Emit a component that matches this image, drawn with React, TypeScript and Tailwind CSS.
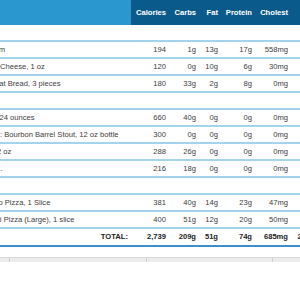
import React from 'react'

type Item = {
  name: string
  cal: string
  carbs: string
  fat: string
  protein: string
  chol: string
  sodium: string
}

const meals: { title: string; items: Item[] }[] = [
  {
    title: 'Breakfast',
    items: [
      { name: 'Whole Eggs, Scrambled, 3 Medium', cal: '194', carbs: '1g', fat: '13g', protein: '17g', chol: '558mg', sodium: '189mg' },
      { name: 'Tillamook - Sharp White Cheddar Cheese, 1 oz', cal: '120', carbs: '0g', fat: '10g', protein: '6g', chol: '30mg', sodium: '180mg' },
      { name: "Nature's Own - 100% Whole Wheat Bread, 3 pieces", cal: '180', carbs: '33g', fat: '2g', protein: '8g', chol: '0mg', sodium: '330mg' },
    ],
  },
  {
    title: 'Drinks',
    items: [
      { name: 'Blue Moon Belgian White Wheat, 24 ounces', cal: '660', carbs: '40g', fat: '0g', protein: '0g', chol: '0mg', sodium: '30mg' },
      { name: 'Lexington Brewing & Distilling Co.: Bourbon Barrel Stout, 12 oz bottle', cal: '300', carbs: '0g', fat: '0g', protein: '0g', chol: '0mg', sodium: '20mg' },
      { name: 'Samuel Adams - Boston Lager, 12 oz', cal: '288', carbs: '26g', fat: '0g', protein: '0g', chol: '0mg', sodium: '20mg' },
      { name: 'Heineken Premium Lager, 12 fl oz.', cal: '216', carbs: '18g', fat: '0g', protein: '0g', chol: '0mg', sodium: '10mg' },
    ],
  },
  {
    title: 'Dinner',
    items: [
      { name: "Lou Malnati's - Deep Dish Chicago Pizza, 1 Slice", cal: '381', carbs: '40g', fat: '14g', protein: '23g', chol: '47mg', sodium: '800mg' },
      { name: 'Pizza Hut Hand Tossed Pepperoni Pizza (Large), 1 slice', cal: '400', carbs: '51g', fat: '12g', protein: '20g', chol: '50mg', sodium: '991mg' },
    ],
  },
]

const columns = ['Calories', 'Carbs', 'Fat', 'Protein', 'Cholest', 'Sodium']

const grid = 'grid grid-cols-[281px_40px_30px_22px_34px_36px_40px]'
const cell = 'flex items-center justify-end pr-[5px] whitespace-nowrap'

const Row = ({ item }: { item: Item }) => (
  <div className={`${grid} h-[17px] border-b-2 border-[#a3d3ed]`}>
    <div className="flex items-center pl-[36px] whitespace-nowrap overflow-hidden">{item.name}</div>
    <div className={cell}>{item.cal}</div>
    <div className={cell}>{item.carbs}</div>
    <div className={cell}>{item.fat}</div>
    <div className={cell}>{item.protein}</div>
    <div className={cell}>{item.chol}</div>
    <div className={cell}>{item.sodium}</div>
  </div>
)

export default function App() {
  return (
    <div className="w-[300px] h-[300px] overflow-hidden bg-white font-['Liberation_Sans',Arial,sans-serif] text-[7.6px] text-[#3d3d3d]">
      {/* table is scrolled sideways, name column starts off screen */}
      <div className="ml-[-150px] w-[523px]">
        <div className={`${grid} h-[25px]`}>
          <div className="bg-[#2a97cf]" />
          {columns.map((c) => (
            <div key={c} className={`${cell} bg-[#0b5a8c] text-white font-bold`}>
              {c}
            </div>
          ))}
        </div>

        {meals.map((meal) => (
          <div key={meal.title}>
            <div className={`${grid} h-[17px] border-b-2 border-[#a3d3ed]`}>
              <div className="flex items-center pl-[36px] font-bold">{meal.title}</div>
            </div>
            {meal.items.map((item) => (
              <Row key={item.name} item={item} />
            ))}
          </div>
        ))}

        <div className={`${grid} h-[18px] border-b-2 border-[#3b8fcb] font-bold text-[#222]`}>
          <div className="flex items-center justify-end pr-[3px]">TOTAL:</div>
          <div className={cell}>2,739</div>
          <div className={cell}>209g</div>
          <div className={cell}>51g</div>
          <div className={cell}>74g</div>
          <div className={cell}>685mg</div>
          <div className={cell}>2,570mg</div>
        </div>

        <div className="mt-[10px] h-[5px] border-t border-[#d8d8d8] bg-[#ececec] flex">
          <div className="w-[160px] border-r border-[#d0d0d0]" />
          <div className="w-[137px] border-r border-[#d0d0d0]" />
          <div className="w-[126px] border-r border-[#d0d0d0]" />
        </div>
      </div>
    </div>
  )
}
